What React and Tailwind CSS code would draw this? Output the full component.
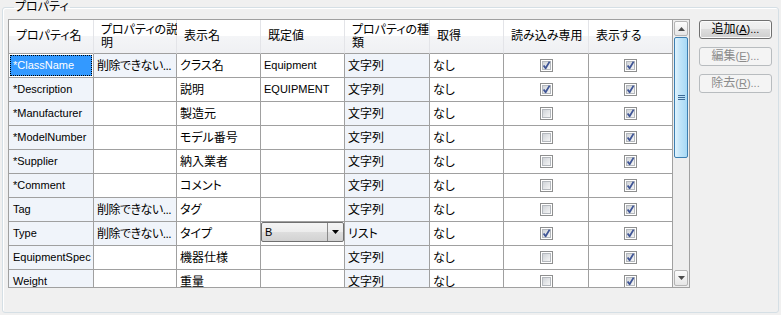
import { useId } from 'react';

const COLS = ['w-[85px]', 'w-[83px]', 'w-[84px]', 'w-[84px]', 'w-[85px]', 'w-[74px]', 'w-[85px]', 'w-[84px]'];

const HEADERS = [
  ['プロパティ名'],
  ['プロパティの説', '明'],
  ['表示名'],
  ['既定値'],
  ['プロパティの種', '類'],
  ['取得'],
  ['読み込み専用'],
  ['表示する'],
];

const ROWS = [
  { name: '*ClassName', desc: '削除できない...', disp: 'クラス名', def: 'Equipment', ro: true, selected: true },
  { name: '*Description', disp: '説明', def: 'EQUIPMENT', ro: true },
  { name: '*Manufacturer', disp: '製造元' },
  { name: '*ModelNumber', disp: 'モデル番号' },
  { name: '*Supplier', disp: '納入業者' },
  { name: '*Comment', disp: 'コメント' },
  { name: 'Tag', desc: '削除できない...', disp: 'タグ' },
  { name: 'Type', desc: '削除できない...', disp: 'タイプ', combo: 'B', kind: 'リスト', ro: true },
  { name: 'EquipmentSpec', disp: '機器仕様' },
  { name: 'Weight', disp: '重量' },
];

const isLatin = (s) => /^[\x00-\x7f]*$/.test(s);

function Txt({ children, className = '' }) {
  if (!children) return null;
  return (
    <span className={(isLatin(children) ? 'text-[11px] ' : 'text-[12px] ') + className}>
      {children}
    </span>
  );
}

function Check({ checked }) {
  const id = useId();
  return (
    <svg width="13" height="13" viewBox="0 0 13 13">
      <defs>
        <linearGradient id={id} x1="0" y1="0" x2="1" y2="1">
          <stop offset="0" stopColor="#cdd1d6" />
          <stop offset="1" stopColor="#f8f8f8" />
        </linearGradient>
      </defs>
      <rect x="0.5" y="0.5" width="12" height="12" fill="#fff" stroke="#8e8f8f" />
      <rect x="2.5" y="2.5" width="8" height="8" fill={`url(#${id})`} stroke="#b4b8bd" />
      {checked && (
        <path d="M3.6 6.4 L5.6 9.2 L9.6 2.6" fill="none" stroke="#3f5596" strokeWidth="1.8" strokeLinejoin="round" />
      )}
    </svg>
  );
}

function Combo({ value }) {
  return (
    <div className="flex h-[20px] w-full self-start border border-[#707070] rounded-[2px] bg-[linear-gradient(#f4f4f4,#ececec_50%,#dedede_50%,#d2d2d2)]">
      <span className="flex-1 pl-[3px] text-[11px] leading-[18px]">{value}</span>
      <span className="w-[16px] flex items-center justify-center border-l border-[#8a8a8a]">
        <svg width="7" height="4" viewBox="0 0 7 4">
          <path d="M0 0 H7 L3.5 4 Z" fill="#000" />
        </svg>
      </span>
    </div>
  );
}

function Cell({ w, tint, children, className = '' }) {
  return (
    <div
      className={`${w} h-[24px] shrink-0 flex items-center overflow-hidden whitespace-nowrap border-r border-b border-[#a0a0a0] ${
        tint ? 'bg-[#f0f4fa]' : 'bg-white'
      } ${className}`}
    >
      {children}
    </div>
  );
}

function Row({ r }) {
  return (
    <div className="flex">
      {r.selected ? (
        <Cell w={COLS[0]} className="p-[1px]">
          <div className="h-full w-full flex items-center pl-[3px] bg-[#3399ff] text-white outline-1 outline-dotted outline-black -outline-offset-1">
            <Txt>{r.name}</Txt>
          </div>
        </Cell>
      ) : (
        <Cell w={COLS[0]} tint className="pl-[4px]">
          <Txt>{r.name}</Txt>
        </Cell>
      )}
      <Cell w={COLS[1]} tint={!!r.desc} className="pl-[3px]">
        <Txt className="tracking-[-0.5px]">{r.desc}</Txt>
      </Cell>
      <Cell w={COLS[2]} className="pl-[3px]">
        <Txt>{r.disp}</Txt>
      </Cell>
      <Cell w={COLS[3]} className={r.combo ? 'items-start' : 'pl-[3px]'}>
        {r.combo ? <Combo value={r.combo} /> : <Txt>{r.def}</Txt>}
      </Cell>
      <Cell w={COLS[4]} tint className="pl-[3px]">
        <Txt>{r.kind || '文字列'}</Txt>
      </Cell>
      <Cell w={COLS[5]} className="pl-[3px]">
        <Txt>なし</Txt>
      </Cell>
      <Cell w={COLS[6]} className="justify-center">
        <Check checked={!!r.ro} />
      </Cell>
      <Cell w={COLS[7]} className="justify-center">
        <Check checked />
      </Cell>
    </div>
  );
}

function ScrollBar() {
  return (
    <div className="w-[16px] flex flex-col bg-[#eeeeee] px-[1px] py-[1px]">
      <div className="h-[15px] flex items-center justify-center rounded-[2px] border border-[#b5b5b5] bg-[linear-gradient(#fcfcfc,#e6e6e6)]">
        <svg width="7" height="4" viewBox="0 0 7 4">
          <path d="M0 4 H7 L3.5 0 Z" fill="#4d4d4d" />
        </svg>
      </div>
      <div className="mt-[1px] h-[121px] flex items-center justify-center rounded-[2px] border border-[#3c7fb1] bg-[linear-gradient(90deg,#e1f3fd,#bfe4f9_45%,#a7d9f5)]">
        <div className="flex flex-col gap-[1px]">
          <span className="block w-[7px] h-[1px] bg-[#3c6a96]" />
          <span className="block w-[7px] h-[1px] bg-[#3c6a96]" />
          <span className="block w-[7px] h-[1px] bg-[#3c6a96]" />
        </div>
      </div>
      <div className="flex-1" />
      <div className="h-[16px] flex items-center justify-center rounded-[2px] border border-[#b5b5b5] bg-[linear-gradient(#fcfcfc,#e6e6e6)]">
        <svg width="7" height="4" viewBox="0 0 7 4">
          <path d="M0 0 H7 L3.5 4 Z" fill="#4d4d4d" />
        </svg>
      </div>
    </div>
  );
}

function Btn({ label, keyChar, disabled }) {
  return (
    <button
      disabled={disabled}
      className={`w-[73px] h-[19px] rounded-[3px] border text-[12px] leading-[17px] ${
        disabled
          ? 'border-[#b8bcbf] bg-[#f4f4f4] text-[#8b8b8b]'
          : 'border-[#707070] bg-[linear-gradient(#f2f2f2,#ebebeb_50%,#dddddd_50%,#cfcfcf)] text-black shadow-[inset_0_0_0_1px_#fbfbfb]'
      }`}
    >
      {label}
      <span className="text-[11px]">
        (<span className="underline">{keyChar}</span>)...
      </span>
    </button>
  );
}

export default function App() {
  return (
    <div className="w-[781px] h-[315px] bg-[#f0f0f0] px-[2px] pb-[2px] font-['Liberation_Sans','Noto_Sans_CJK_JP',sans-serif] [font-feature-settings:'palt'] text-black">
      <fieldset className="h-full border border-[#d5dfe5] rounded-[3px] shadow-[inset_1px_1px_0_#ffffff] pl-[5px] pr-[6px] pt-[5px]">
        <legend className="ml-[6px] px-[1px] text-[12px] leading-[14px]">プロパティ</legend>
        <div className="flex">
          <div className="w-[682px] h-[269px] flex border border-[#a0a0a0]">
            <div className="w-[664px] overflow-hidden">
              <div className="flex">
                {HEADERS.map((h, i) => (
                  <div
                    key={i}
                    className={`${COLS[i]} h-[34px] shrink-0 flex flex-col justify-center pl-[7px] border-b border-[#a0a0a0] border-r ${
                      i === 7 ? 'border-r-[#a0a0a0]' : 'border-r-[#e3e4e8]'
                    } bg-[linear-gradient(#ffffff,#ffffff_50%,#f4f5f7_50%,#eff0f3)] text-[12px] leading-[13px]`}
                  >
                    {h.map((line) => (
                      <span key={line} className="block h-[13px] whitespace-nowrap">{line}</span>
                    ))}
                  </div>
                ))}
              </div>
              {ROWS.map((r) => (
                <Row key={r.name} r={r} />
              ))}
            </div>
            <ScrollBar />
          </div>
          <div className="ml-[9px] flex flex-col gap-[8px] pt-[1px]">
            <Btn label="追加" keyChar="A" />
            <Btn label="編集" keyChar="E" disabled />
            <Btn label="除去" keyChar="R" disabled />
          </div>
        </div>
      </fieldset>
    </div>
  );
}
